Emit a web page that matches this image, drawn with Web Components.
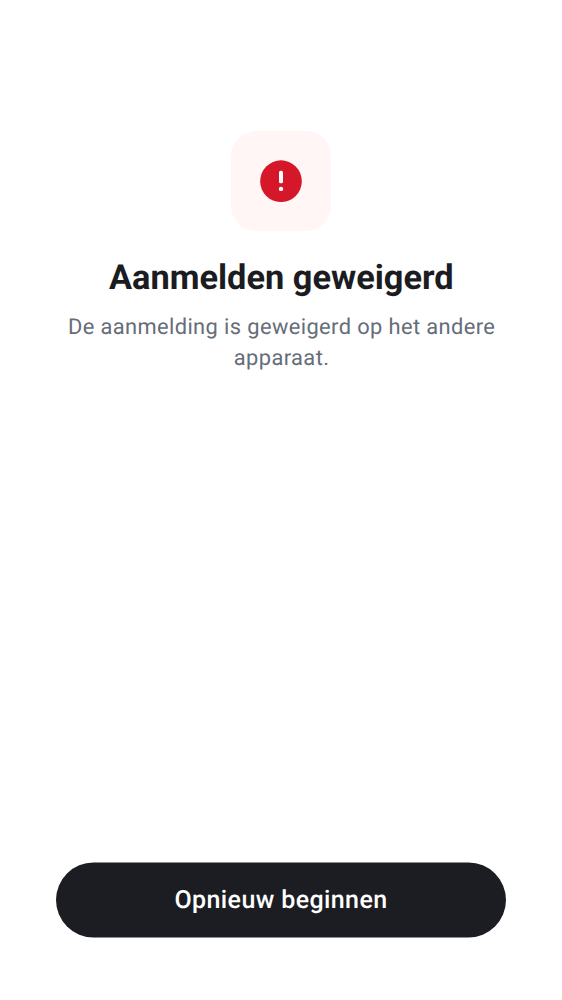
<!DOCTYPE html>
<html lang="nl"><head><meta charset="utf-8"><title>Aanmelden</title>
<style>html,body{margin:0;height:100%;background:#fff}</style></head><body>
<login-screen></login-screen>
<script>
const define=(name,html)=>customElements.define(name,class extends HTMLElement{
  constructor(){super();const t=document.createElement('template');t.innerHTML=html;this.attachShadow({mode:'open'}).append(t.content.cloneNode(true));}
});
define('alert-tile',`<style>:host{display:flex;align-items:center;justify-content:center;width:100px;height:100px;border-radius:25px;background:#fff6f5}svg{display:block}</style>
<svg width="42" height="42" viewBox="0 0 42 42"><circle cx="21" cy="21.2" r="20.83" fill="#d51829"/><rect x="19" y="10.8" width="4" height="12.5" rx="1.6" fill="#fff"/><circle cx="21" cy="28.9" r="2.2" fill="#fff"/></svg>`);
define('status-message',`<style>:host{display:flex;flex-direction:column;align-items:center;text-align:center}
h1{margin:25px 0 0;padding-left:.6px;font-size:34.375px;line-height:44px;font-weight:700;color:#1b1c21;white-space:nowrap}
p{margin:12px 0 0;padding-left:1.2px;font-size:21.875px;line-height:31.25px;letter-spacing:.39px;color:#656d78}</style>
<alert-tile></alert-tile><h1><slot name="title"></slot></h1><p><slot></slot></p>`);
define('pill-button',`<style>:host{display:block}button{display:block;width:100%;height:76px;border:0;padding:1px 0 0;clip-path:inset(.5px 0 round 37.5px);background:#1c1d22;color:#fff;font:500 25px/31px Roboto,sans-serif;letter-spacing:.39px;text-rendering:geometricPrecision}</style><button><slot></slot></button>`);
define('login-screen',`<style>:host{display:flex;flex-direction:column;justify-content:space-between;box-sizing:border-box;height:1000px;padding:131px 56px 62px;font-family:Roboto,sans-serif;text-rendering:geometricPrecision}</style>
<status-message><span slot="title">Aanmelden geweigerd</span>De aanmelding is geweigerd op het andere apparaat.</status-message><pill-button>Opnieuw beginnen</pill-button>`);
</script></body></html>
